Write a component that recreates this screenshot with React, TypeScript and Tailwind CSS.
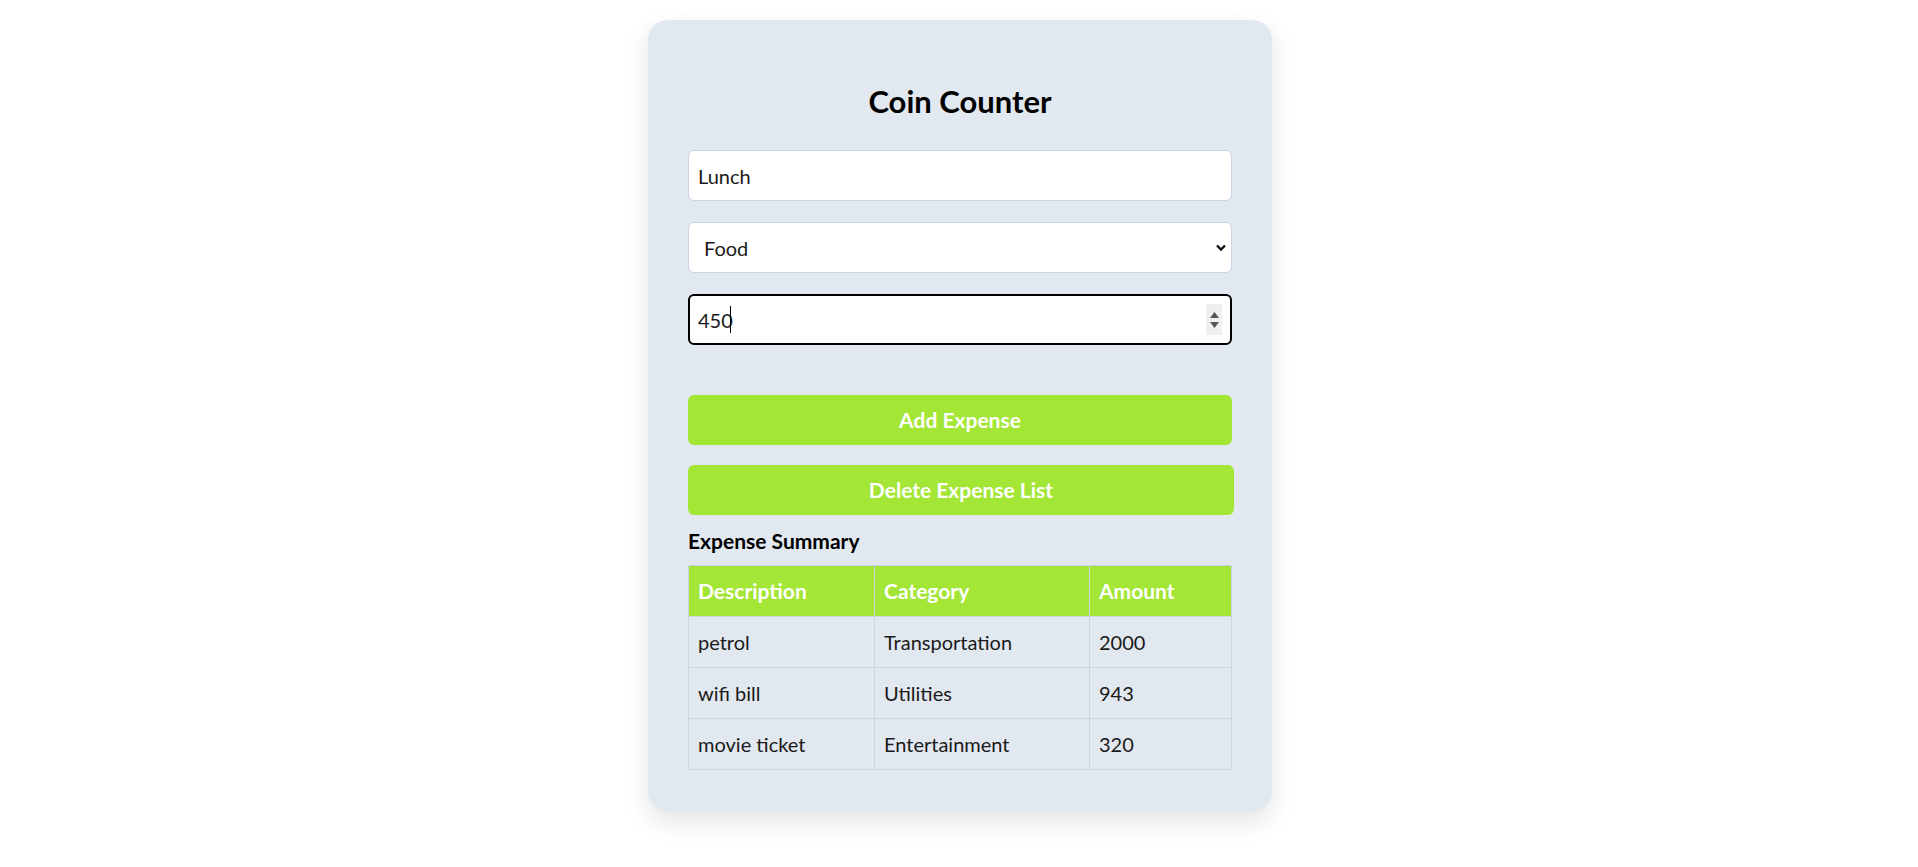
import { useState } from "react";

type Expense = { description: string; category: string; amount: number };

const initial: Expense[] = [
  { description: "petrol", category: "Transportation", amount: 2000 },
  { description: "wifi bill", category: "Utilities", amount: 943 },
  { description: "movie ticket", category: "Entertainment", amount: 320 }
];

const categories = ["Food", "Transportation", "Utilities", "Entertainment", "Other"];

export default function App() {
  const [expenses, setExpenses] = useState<Expense[]>(initial);
  const [description, setDescription] = useState("Lunch");
  const [category, setCategory] = useState("Food");
  const [amount, setAmount] = useState("450");

  const addExpense = () => {
    if (!description || !amount) return;
    setExpenses([...expenses, { description, category, amount: Number(amount) }]);
  };

  return (
    <div className="min-h-screen bg-white pl-[2px] pt-[20px] font-['Segoe_UI',Lato,sans-serif] text-[#1a1a1a]">
      <div className="mx-auto w-[624px] rounded-[20px] bg-[#e2e8f0] px-[40px] pb-[41px] pt-[63px] shadow-[0_10px_24px_rgba(15,23,42,0.12)]">
        <h2 className="mb-[31px] text-center text-[31px] font-bold leading-[36px] text-black">Coin Counter</h2>

        <div className="flex flex-col gap-[21px]">
          <input
            type="text"
            value={description}
            onChange={(e) => setDescription(e.target.value)}
            className="h-[51px] w-full rounded-[6px] border border-[#cbd5e1] bg-white px-[9px] text-[20px] outline-none"
          />
          <div className="relative">
            <select
              value={category}
              onChange={(e) => setCategory(e.target.value)}
              className="h-[51px] w-full appearance-none rounded-[6px] border border-[#cbd5e1] bg-white pl-[15px] text-[20px] outline-none"
            >
              {categories.map((c) => (
                <option key={c}>{c}</option>
              ))}
            </select>
            <svg className="pointer-events-none absolute right-[5px] top-[21px] h-[10px] w-[12px]" viewBox="0 0 12 10">
              <polyline points="2,2.5 6,6.5 10,2.5" fill="none" stroke="#111" strokeWidth="2.4" />
            </svg>
          </div>
          <div className="relative">
            <input
              type="number"
              value={amount}
              onChange={(e) => setAmount(e.target.value)}
              className="h-[51px] w-full appearance-none rounded-[6px] border-2 border-black bg-white px-[8px] text-[20px] outline-none [appearance:textfield] [&::-webkit-inner-spin-button]:appearance-none"
            />
            <span className="pointer-events-none absolute left-[42px] top-[12px] h-[27px] w-px bg-black" />
            <div className="pointer-events-none absolute right-[10px] top-[10px] flex h-[31px] w-[16px] flex-col items-center justify-center gap-[4px] bg-[#efefef]">
              <svg className="h-[6px] w-[9px]" viewBox="0 0 9 6">
                <polygon points="4.5,0 9,6 0,6" fill="#555" />
              </svg>
              <svg className="h-[6px] w-[9px]" viewBox="0 0 9 6">
                <polygon points="0,0 9,0 4.5,6" fill="#555" />
              </svg>
            </div>
          </div>
        </div>

        <button
          onClick={addExpense}
          className="mt-[50px] h-[50px] w-full rounded-[6px] bg-[#a3e635] text-[21px] font-bold text-white"
        >
          Add Expense
        </button>
        <button
          onClick={() => setExpenses([])}
          className="mt-[20px] h-[50px] w-[calc(100%+2px)] rounded-[6px] bg-[#a3e635] text-[21px] font-bold text-white"
        >
          Delete Expense List
        </button>

        <h3 className="mb-[12px] mt-[14px] text-[21px] font-bold leading-[24px] text-black">Expense Summary</h3>

        <table className="w-full table-fixed border-collapse text-left text-[20px]">
          <colgroup>
            <col className="w-[186px]" />
            <col className="w-[215px]" />
            <col className="w-[142px]" />
          </colgroup>
          <thead>
            <tr className="h-[51px] bg-[#a3e635] text-[21px] text-white">
              <th className="border border-[#cbd5e1] px-[9px] font-bold">Description</th>
              <th className="border border-[#cbd5e1] px-[9px] font-bold">Category</th>
              <th className="border border-[#cbd5e1] px-[9px] font-bold">Amount</th>
            </tr>
          </thead>
          <tbody>
            {expenses.map((e, i) => (
              <tr key={i} className="h-[51px]">
                <td className="border border-[#cbd5e1] px-[9px]">{e.description}</td>
                <td className="border border-[#cbd5e1] px-[9px]">{e.category}</td>
                <td className="border border-[#cbd5e1] px-[9px]">{e.amount}</td>
              </tr>
            ))}
          </tbody>
        </table>
      </div>
    </div>
  );
}
